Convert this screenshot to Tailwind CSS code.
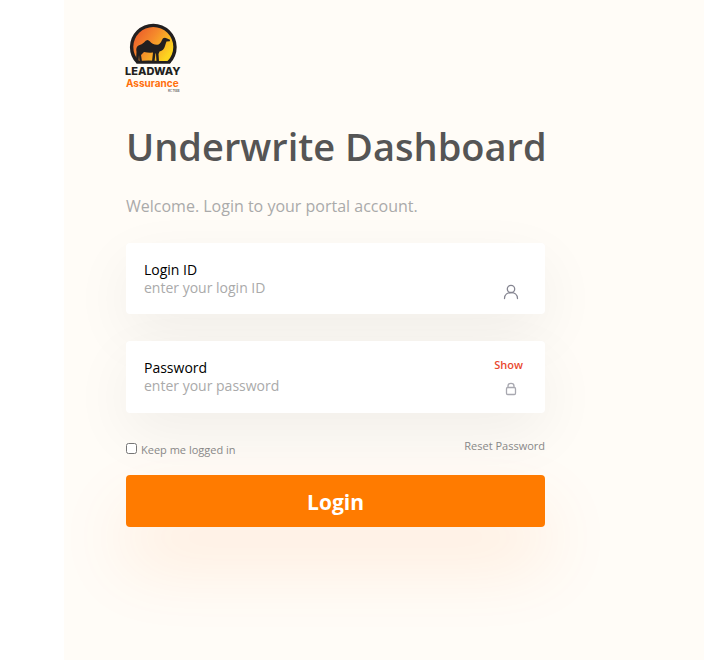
<!DOCTYPE html>
<html lang="en">
<head>
<meta charset="utf-8">
<meta name="viewport" content="width=device-width, initial-scale=1">
<title>Underwrite Dashboard</title>
<script src="https://cdn.jsdelivr.net/npm/@tailwindcss/browser@4"></script>
</head>
<body class="flex min-h-screen bg-white font-['Open_Sans','Noto_Sans',sans-serif]">
<main class="ml-16 min-w-0 flex-1 bg-[#fffcf7] pt-6 pr-10 pl-[62px]">
  <div class="max-w-[419px]">
    <svg class="h-[70px] w-[56px] overflow-visible" viewBox="0 0 56 70" role="img" aria-label="Leadway Assurance">
      <defs>
        <linearGradient id="sun" x1="0" y1="0" x2="1" y2="0.6">
          <stop offset="0" stop-color="#e9512b"/><stop offset="0.5" stop-color="#f58a2b"/><stop offset="1" stop-color="#fdd51f"/>
        </linearGradient>
      </defs>
      <path d="M10.6 39.5A23.4 23.4 0 1 1 44 39.5Z" fill="#221f20"/>
      <path d="M13 37A20 20 0 1 1 41.600 37Z" fill="url(#sun)"/>
      <path d="M10 37.500Q20 36 29 36.800T44 36.800L45 38L44 39.500H10.600Z" fill="#221f20"/>
      <path d="M10 37L10.500 28Q9.500 23 12.500 21.500Q16 20.500 18 18.500Q21 14 24 17.500Q26 20.500 31 20.800Q34 21 36 16L37 14.300Q39 13.400 40.500 14.300L44 15.800L43.800 17.200L40.500 17.500Q39.800 19 39 22Q37.800 26.500 33.500 27.500L32.500 30L33 37.500H30.500L30 30L29.500 29L28.500 37.500H26L27 28.500Q23 29 18 28L15 31L16 37.500H13.500L13 31L12.500 37.500Z" fill="#221f20"/>
      <text x="-1" y="51" font-family="Inter,sans-serif" font-size="11" font-weight="800" fill="#221f20">LEADWAY</text>
      <text x="0" y="63" font-family="Inter,sans-serif" font-size="10" font-weight="700" fill="#ff6f0c">Assurance</text>
      <text x="42" y="68" font-family="'Open Sans',sans-serif" font-size="3" font-weight="600" fill="#555">RC 7588</text>
    </svg>
    <h1 class="mt-7 text-[38px] leading-[48px] font-semibold whitespace-nowrap text-[#555]">Underwrite Dashboard</h1>
    <p class="mt-6 text-base leading-6 text-[#aaa]">Welcome. Login to your portal account.</p>
    <form class="mt-[25px]">
      <div class="flex h-[71px] items-center justify-between rounded bg-white px-[18px] shadow-[0_20px_60px_rgba(0,0,0,0.06)]">
        <div class="flex min-w-0 flex-1 flex-col">
          <label for="login" class="text-sm leading-[18px] text-black">Login ID</label>
          <input id="login" type="text" placeholder="enter your login ID" class="h-[18px] w-full text-sm leading-[18px] outline-none placeholder:text-[#aaa]">
        </div>
        <svg class="mt-[26px] mr-2 size-4" viewBox="0 0 16 16" fill="none" stroke="#858591" stroke-width="1.3" stroke-linecap="round"><circle cx="8" cy="5" r="3.7"/><path d="M1.500 14.500C1.500 6.500 14.500 6.500 14.500 14.500"/></svg>
      </div>
      <div class="mt-[27px] flex h-[72px] items-center justify-between rounded bg-white px-[18px] shadow-[0_20px_60px_rgba(0,0,0,0.06)]">
        <div class="flex min-w-0 flex-1 flex-col">
          <label for="password" class="text-sm leading-[18px] text-black">Password</label>
          <input id="password" type="password" placeholder="enter your password" class="h-[18px] w-full text-sm leading-[18px] outline-none placeholder:text-[#aaa]">
        </div>
        <div class="mr-1 flex flex-col items-center gap-2">
          <button type="button" class="text-[11px] leading-4 font-semibold text-[#e9482f]">Show</button>
          <svg class="ml-1 size-4" viewBox="0 0 16 16" fill="none" stroke="#a8a8b0" stroke-width="1.3"><rect x="3.500" y="6.500" width="9" height="7" rx="1.200"/><path d="M5 6.500V5Q5 2.400 8 2.400T11 5V6.500"/></svg>
        </div>
      </div>
      <div class="mt-6 flex items-start justify-between text-[11px] leading-[18px] text-[#888]">
        <label for="keep" class="flex items-center gap-1 pt-1"><input id="keep" type="checkbox" class="mb-1 size-[11px]">Keep me logged in</label>
        <a href="#">Reset Password</a>
      </div>
      <button type="submit" class="mt-4 h-[52px] w-full rounded bg-[#ff7b00] pt-0.5 text-[21px] leading-7 font-bold text-white shadow-[0_36px_72px_rgba(255,110,10,0.12)]">Login</button>
    </form>
  </div>
</main>
</body>
</html>
